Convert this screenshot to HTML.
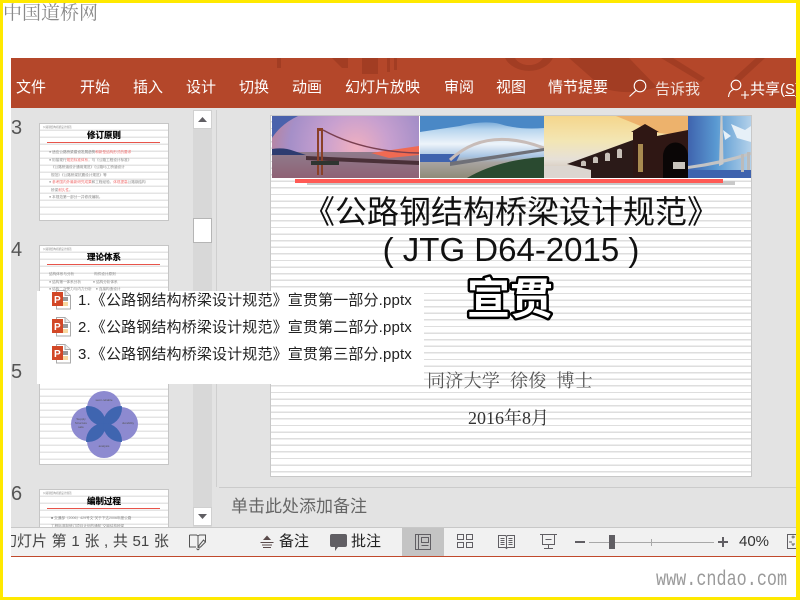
<!DOCTYPE html>
<html><head><meta charset="utf-8">
<style>
html,body{margin:0;padding:0;background:#fff}
#p{position:relative;width:800px;height:600px;overflow:hidden;background:#fff;font-family:"Liberation Sans","Noto Sans CJK SC",sans-serif}
#p div{position:absolute;white-space:nowrap}
.m{top:79px;color:#fff;font-size:15px;line-height:18px}
.lines{background-color:#fff;background-image:repeating-linear-gradient(to bottom,#fff 0,#fff 5.2px,#dedede 5.2px,#dedede 6.6px)}
.th{left:39px;width:128px;border:1px solid #c6c6c6;background-color:#fff;background-image:repeating-linear-gradient(to bottom,#fff 0,#fff 5.4px,#e4e4e4 5.4px,#e4e4e4 7px);overflow:hidden}
.num{left:11px;font-size:20px;color:#555;line-height:22px}
.tt{left:0;width:128px;text-align:center;font-size:8.5px;font-weight:bold;color:#000;top:5px;line-height:12px;-webkit-text-stroke:.2px #000}
.rl{left:7px;width:113px;height:1px;background:#e8544a;top:18px}
.sm{font-size:3.6px;line-height:7.5px;color:#888;left:9px}
.sm b{color:#f07070;font-weight:normal}
.hd{font-size:2.6px;color:#888;left:3px;top:1px}
.f{left:78px;font-size:15px;color:#222;line-height:20px;letter-spacing:.15px}
.st{font-size:15px;line-height:20px;color:#222}
</style></head><body><div id="p">
<!-- yellow frame -->
<div style="left:0;top:0;width:800px;height:3px;background:#ffe900"></div>
<div style="left:0;top:0;width:3px;height:600px;background:#ffe900"></div>
<div style="left:796px;top:0;width:4px;height:600px;background:#ffe900"></div>
<div style="left:0;top:597px;width:800px;height:3px;background:#ffe900"></div>
<!-- watermark -->
<div style="left:3px;top:0;font-size:19px;line-height:24px;color:#8a8a8a;font-family:'Noto Serif CJK SC','Liberation Serif',serif">中国道桥网</div>
<div style="left:656px;top:569px;font-size:21px;line-height:24px;color:#9a9a9a;font-family:'Liberation Mono',monospace;transform:scaleX(.8);transform-origin:left top">www.cndao.com</div>
<!-- ribbon -->
<div style="left:11px;top:58px;width:785px;height:50px;background:#b4472a;overflow:hidden">
<svg width="785" height="50" style="position:absolute;left:0;top:0">
<g fill="#a23d23"><rect x="266" y="0" width="4" height="10"/><path d="M321 0h16v10h-6z"/><rect x="351" y="0" width="16" height="16"/><rect x="376" y="0" width="3" height="14"/><rect x="383" y="0" width="3" height="12"/>
<path d="M494 0a26 21 0 0 0 48 0h-10a15 11 0 0 1-28 0z"/><path d="M558 0l34 30q14 5 30 4q12-1 24-5l-28-29z"/><path d="M650 0l40 24l4-4l-32-20z"/><path d="M745 0l-22 20l5 4l26-24z"/></g></svg></div>
<div class="m" style="left:16px">文件</div><div class="m" style="left:80px">开始</div><div class="m" style="left:133px">插入</div><div class="m" style="left:186px">设计</div><div class="m" style="left:239px">切换</div><div class="m" style="left:292px">动画</div><div class="m" style="left:345px">幻灯片放映</div><div class="m" style="left:444px">审阅</div><div class="m" style="left:496px">视图</div><div class="m" style="left:548px">情节提要</div>
<svg width="20" height="20" style="position:absolute;left:628px;top:78px" fill="none" stroke="#fff" stroke-width="1.1"><circle cx="12" cy="8" r="5.8"/><path d="M8 12.500L1.500 18.500"/></svg>
<div class="m" style="left:655px;top:81px;color:#f2e2dc">告诉我</div>
<svg width="22" height="22" style="position:absolute;left:727px;top:79px" fill="none" stroke="#fff" stroke-width="1.1"><circle cx="9" cy="6" r="4.800"/><path d="M1.500 18q.5-6 5-7.500M14 16h8M18 12v8"/></svg>
<div class="m" style="left:750px;top:81px;width:46px;overflow:hidden">共享(<u>S</u>)</div>
<!-- panels -->
<div style="left:11px;top:108px;width:785px;height:419px;background:#e3e3e3"></div>
<div style="left:216px;top:110px;width:1px;height:377px;background:#cfcfcf"></div>
<!-- thumbs -->
<div class="num" style="top:117px">3</div>
<div class="th" style="top:123px;height:96px"><div class="hd">公路钢结构桥梁设计规范</div><div class="tt">修订原则</div><div class="rl"></div>
<div class="sm" style="top:25px">● 适应公路桥梁建设发展趋势<b>和新型结构形式的要求</b><br>● 衔接现行<b>规范标准体系</b>，与《公路工程设计标准》<br>&nbsp;&nbsp;《公路桥涵设计通用规范》《公路圬工桥涵设计<br>&nbsp;&nbsp;规范》《公路桥梁抗震设计规范》等<br>● <b>参考国内外最新研究成果</b>和工程经验，<b>体现提高</b>公路钢结构<br>&nbsp;&nbsp;桥梁<b>耐久性</b>。<br>● 本规范第一部分一并修改编制。</div></div>
<div class="num" style="top:239px">4</div>
<div class="th" style="top:245px;height:96px"><div class="hd">公路钢结构桥梁设计规范</div><div class="tt">理论体系</div><div class="rl"></div>
<div class="sm" style="top:25px">结构体系与分析 &nbsp;&nbsp;&nbsp;&nbsp;&nbsp;&nbsp;&nbsp;&nbsp;&nbsp;&nbsp;&nbsp;&nbsp;&nbsp;&nbsp;&nbsp;&nbsp;&nbsp;&nbsp;&nbsp;构件设计原则<br>● 结构第一体系分析 &nbsp;&nbsp;&nbsp;&nbsp;&nbsp;&nbsp;&nbsp;&nbsp;&nbsp;&nbsp;&nbsp;● 结构分析体系<br>● 结构二次受力与内力分析 &nbsp;&nbsp;&nbsp;● 连接构造设计</div></div>
<div class="num" style="top:361px">5</div>
<div class="th" style="top:368px;height:95px">
<svg width="128" height="95" style="position:absolute;left:0;top:0">
<defs><clipPath id="ct"><circle cx="64" cy="39" r="18"/></clipPath><clipPath id="cb"><circle cx="64" cy="72" r="18"/></clipPath></defs>
<g fill="#8d8ad0"><circle cx="64" cy="39" r="17"/><circle cx="64" cy="72" r="17"/><circle cx="48" cy="55" r="17"/><circle cx="81" cy="55" r="17"/></g>
<g fill="#3f65b0"><circle cx="48" cy="55" r="18" clip-path="url(#ct)"/><circle cx="81" cy="55" r="18" clip-path="url(#ct)"/><circle cx="48" cy="55" r="18" clip-path="url(#cb)"/><circle cx="81" cy="55" r="18" clip-path="url(#cb)"/></g>
<g fill="#555" font-size="3" font-family="'Liberation Sans','Noto Sans CJK SC',sans-serif" text-anchor="middle"><text x="64" y="32">semi-reliable</text><text x="41" y="51">Supply</text><text x="41" y="55">Structure</text><text x="41" y="59">safe</text><text x="88" y="55">durability</text><text x="64" y="78">analysis</text></g></svg></div>
<div class="num" style="top:483px">6</div>
<div class="th" style="top:489px;height:50px"><div class="hd">公路钢结构桥梁设计规范</div><div class="tt">编制过程</div><div class="rl"></div>
<div class="sm" style="top:25px">&nbsp;&nbsp;■ 交通部〔2006〕429号文"关于下达2006年度公路<br>&nbsp;&nbsp;工程标准制修订项目计划的通知"交钢结构桥梁</div></div>
<div style="left:11px;top:527px;width:210px;height:1px;background:#e3e3e3"></div>
<!-- scrollbar -->
<div style="left:193px;top:110px;width:19px;height:417px;background:#d8d8d8"></div>
<div style="left:193px;top:110px;width:19px;height:19px;background:#fff;box-shadow:inset 0 0 0 1px #d0d0d0"></div>
<svg width="19" height="19" style="position:absolute;left:193px;top:110px"><path d="M5 12h9l-4.500-5z" fill="#605e63"/></svg>
<div style="left:193px;top:218px;width:17px;height:23px;background:#fff;border:1px solid #b5b5b5"></div>
<div style="left:193px;top:507px;width:19px;height:19px;background:#fff;box-shadow:inset 0 0 0 1px #d0d0d0"></div>
<svg width="19" height="19" style="position:absolute;left:193px;top:507px"><path d="M5 7h9l-4.500 5z" fill="#605e63"/></svg>
<!-- slide -->
<div class="lines" style="left:270px;top:115px;width:480px;height:360px;border:1px solid #c8c8c8;overflow:hidden"></div>
<svg width="480" height="72" style="position:absolute;left:271px;top:116px" viewBox="0 0 480 72">
<defs>
<radialGradient id="g1" gradientUnits="userSpaceOnUse" cx="85" cy="32" r="95"><stop offset="0" stop-color="#f0b0c0"/><stop offset=".35" stop-color="#c8a0cf"/><stop offset=".7" stop-color="#a58fc8"/><stop offset="1" stop-color="#c0808f"/></radialGradient>
<linearGradient id="gw" x1="0" y1="0" x2="0" y2="1"><stop offset="0" stop-color="#8f7c8c"/><stop offset="1" stop-color="#8f6275"/></linearGradient>
<linearGradient id="g2" x1="0" y1="0" x2="0" y2="1"><stop offset="0" stop-color="#4a8ac8"/><stop offset=".22" stop-color="#b7d5ee"/><stop offset=".45" stop-color="#eef4fa"/><stop offset=".65" stop-color="#a8c4e2"/><stop offset=".75" stop-color="#a8a4a0"/><stop offset="1" stop-color="#8f8a78"/></linearGradient>
<linearGradient id="g3" x1="0" y1="0" x2="0" y2="1"><stop offset="0" stop-color="#f5d68c"/><stop offset=".4" stop-color="#f3e6b4"/><stop offset=".7" stop-color="#e6e0d8"/><stop offset="1" stop-color="#c9b9a8"/></linearGradient>
<linearGradient id="g4" x1="0" y1="0" x2="1" y2="0"><stop offset="0" stop-color="#3f63ae"/><stop offset=".45" stop-color="#5a9ad2"/><stop offset="1" stop-color="#b3d1ea"/></linearGradient>
</defs>
<rect x="1" y="0" width="147" height="62" fill="url(#g1)"/>
<path d="M1 0h26Q10 8 1 22z" fill="#4a62ac"/>
<rect x="1" y="36" width="147" height="26" fill="url(#gw)"/>
<path d="M1 33q12-2 22 2l12 4H1z" fill="#2d3c70"/>
<path d="M100 37l48-7v9l-30 3z" fill="#f06a52"/><path d="M35 40l113 5v4l-113-5z" fill="#4a3038"/>
<path d="M46 12h6v47h-2V15h-2v44h-2z" fill="#8a4028"/><path d="M52 14q40 22 96 23" fill="none" stroke="#7a4050" stroke-width="1.500"/><path d="M40 45h28v4H40z" fill="#2e3530"/>
<rect x="149" y="0" width="124" height="62" fill="url(#g2)"/>
<path d="M149 0h124v12q-26 2-44-4q-16-4-40 2l-40 6z" fill="#4a88c6"/><path d="M149 38h40l-4 8h-36z" fill="#3f63ae"/>
<path d="M179 44q36-34 94-12" fill="none" stroke="#c8bcb8" stroke-width="3"/><path d="M179 46l94-14v3l-94 15z" fill="#6f7078"/><path d="M196 62q30-18 77-21v21z" fill="#2a4a30"/>
<rect x="273" y="0" width="144" height="62" fill="url(#g3)"/>
<path d="M345 0h72v20l-30-3z" fill="#edb26c"/>
<path d="M273 50h70v12h-70z" fill="#dcd6d0"/>
<path d="M296 48l66-24v38h-42v-8z" fill="#2b1a18"/>
<path d="M310 46a3 3 0 0 1 5 0v4h-5zM322 42a3 3 0 0 1 5 0v5h-5zM334 38a3 3 0 0 1 5 0v7h-5zM346 34a3 3 0 0 1 5 0v8h-5z" fill="#c8c0b8"/>
<path d="M362 62V16h-2l14-8 14 8h-2v4l31-6v48z" fill="#2f1714"/><path d="M367 28h5v28h-5z" fill="#a88a50"/><path d="M392 62V40a12 13 0 0 1 25 0v22z" fill="#0a0606"/><path d="M402 46h12v7h-12z" fill="#c8c4bc"/>
<rect x="417" y="0" width="63" height="62" fill="url(#g4)"/>
<path d="M460 8l14 6l6-4v16l-14-4zM452 14l8 6-6 4z" fill="#e6f0f8"/>
<path d="M417 54h63v8h-63z" fill="#3f63ae"/><path d="M417 50q30-4 63-14v3q-30 10-63 14z" fill="#c4c4c4"/><path d="M448 50l1.500-50h2l1 48z" fill="#c9c9c9"/><path d="M470 38h3v18h-3zM476 36h3v18h-3z" fill="#bbb"/>
<rect x="148" y="0" width="1" height="62" fill="#fff"/>
<rect x="36" y="65" width="428" height="4" fill="#c9c9c9"/><rect x="24" y="63" width="428" height="4" fill="#ff5a55"/>
</svg>
<div style="left:271px;top:190px;width:480px;text-align:center;font-size:32px;line-height:44px;color:#111">《公路钢结构桥梁设计规范》</div>
<div style="left:271px;top:228px;width:480px;text-align:center;font-size:33px;line-height:44px;color:#111">( JTG D64-2015 )</div>
<svg width="110" height="60" style="position:absolute;left:455px;top:268px">
<text x="12" y="46" font-size="43" font-weight="bold" font-family="'Noto Sans CJK SC',sans-serif" fill="#fff" stroke="#000" stroke-width="5" stroke-linejoin="round" paint-order="stroke">宣贯</text>
</svg>
<div style="left:427px;top:368px;font-size:18px;line-height:24px;color:#555;letter-spacing:.3px;font-family:'Noto Serif CJK SC',serif">同济大学&nbsp;&nbsp;徐俊&nbsp;&nbsp;博士</div>
<div style="left:468px;top:406px;font-size:18px;line-height:24px;color:#333;font-family:'Liberation Serif','Noto Serif CJK SC',serif">2016年8月</div>
<!-- notes -->
<div style="left:219px;top:487px;width:577px;height:1px;background:#cbcbcb"></div>
<div style="left:231px;top:496px;font-size:17px;line-height:22px;color:#666">单击此处添加备注</div>
<!-- overlay -->
<div style="left:37px;top:291px;width:387px;height:93px;background:#fff"></div>
<svg width="24" height="80" style="position:absolute;left:51px;top:287px">
<g><path d="M5.500 3.500H14l5.500 5V22H5.500z" fill="#fff" stroke="#aaa"/><path d="M14 3.500v5h5.500" fill="#eee" stroke="#aaa"/><rect x="12" y="10" width="5" height="4" fill="#999"/><path d="M12 16h5M12 18h5" stroke="#f0b040"/><rect x="1" y="5" width="11" height="14" fill="#d24726"/><text x="3" y="16" font-size="10" font-weight="bold" fill="#fff" font-family="'Liberation Sans',sans-serif">P</text></g>
<g transform="translate(0,27)"><path d="M5.500 3.500H14l5.500 5V22H5.500z" fill="#fff" stroke="#aaa"/><path d="M14 3.500v5h5.500" fill="#eee" stroke="#aaa"/><rect x="12" y="10" width="5" height="4" fill="#999"/><path d="M12 16h5M12 18h5" stroke="#f0b040"/><rect x="1" y="5" width="11" height="14" fill="#d24726"/><text x="3" y="16" font-size="10" font-weight="bold" fill="#fff" font-family="'Liberation Sans',sans-serif">P</text></g>
<g transform="translate(0,54)"><path d="M5.500 3.500H14l5.500 5V22H5.500z" fill="#fff" stroke="#aaa"/><path d="M14 3.500v5h5.500" fill="#eee" stroke="#aaa"/><rect x="12" y="10" width="5" height="4" fill="#999"/><path d="M12 16h5M12 18h5" stroke="#f0b040"/><rect x="1" y="5" width="11" height="14" fill="#d24726"/><text x="3" y="16" font-size="10" font-weight="bold" fill="#fff" font-family="'Liberation Sans',sans-serif">P</text></g>
</svg>
<div class="f" style="top:291px">1.《公路钢结构桥梁设计规范》宣贯第一部分.pptx</div>
<div class="f" style="top:318px">2.《公路钢结构桥梁设计规范》宣贯第二部分.pptx</div>
<div class="f" style="top:345px">3.《公路钢结构桥梁设计规范》宣贯第三部分.pptx</div>
<!-- status -->
<div style="left:11px;top:528px;width:785px;height:28px;background:#f1f1f1;overflow:hidden">
<div style="left:-9px;top:4px;font-size:15px;line-height:20px;color:#444;word-spacing:.5px">幻灯片 第 1 张 , 共 51 张</div>
</div>
<div style="left:11px;top:527px;width:785px;height:1px;background:#c8c8c8"></div>
<div style="left:11px;top:556px;width:785px;height:1px;background:#c0492c"></div>
<svg width="20" height="20" style="position:absolute;left:188px;top:533px" fill="none" stroke="#555"><path d="M1.500 2h7l1.500 1 1.500-1h6v7M10 3v12M1.500 2v12H8M10 17l-1.500-1.500M10 17l1.500-1.500M15.500 7l2 2-5 5-2 .5.500-2z"/></svg>
<svg width="16" height="16" style="position:absolute;left:259px;top:534px"><path d="M4 6h8L8 1.500z" fill="#5a4a4a"/><path d="M1.500 8.500h13M3 11h10M4 13.500h8" stroke="#5a4a4a"/></svg>
<div class="st" style="left:279px;top:532px">备注</div>
<svg width="20" height="18" style="position:absolute;left:329px;top:533px"><path d="M3 1h13q2 0 2 2v9q0 2-2 2H9l-3 4v-4H3q-2 0-2-2V3q0-2 2-2z" fill="#605e63"/></svg>
<div class="st" style="left:351px;top:532px">批注</div>
<div style="left:402px;top:528px;width:42px;height:28px;background:#c4c4c4"></div>
<svg width="18" height="18" style="position:absolute;left:414px;top:533px" fill="none" stroke="#605e63"><path d="M1.500 1.500h15v15h-15zM4.500 1.500v15M7.500 4.500h7v5h-7zM7.500 12.500h7"/></svg>
<svg width="18" height="18" style="position:absolute;left:455px;top:533px" fill="none" stroke="#605e63"><path d="M2.500 1.500h6v5h-6zM11.500 1.500h6v5h-6zM2.500 9.500h6v5h-6zM11.500 9.500h6v5h-6z"/></svg>
<svg width="18" height="18" style="position:absolute;left:498px;top:533px" fill="none" stroke="#605e63"><path d="M.5 2.500h7l1 1 1-1h7v12h-7l-1 1-1-1h-7zM8.500 3.500v12M2.500 5.500h4M2.500 7.500h4M2.500 9.500h4M2.500 11.500h4M10.500 5.500h4M10.500 7.500h4M10.500 9.500h4M10.500 11.500h4"/></svg>
<svg width="18" height="18" style="position:absolute;left:540px;top:533px" fill="none" stroke="#605e63"><path d="M0 1.500h17M2.500 1.500v10h12v-10M8.500 11.500v4M4 15.500h9M5.500 6.500h6"/></svg>
<div style="left:575px;top:541px;width:10px;height:2px;background:#605e63"></div>
<div style="left:589px;top:542px;width:125px;height:1px;background:#a8a8a8"></div>
<div style="left:651px;top:539px;width:1px;height:7px;background:#a8a8a8"></div>
<div style="left:609px;top:535px;width:6px;height:14px;background:#605e63"></div>
<div style="left:718px;top:541px;width:10px;height:2px;background:#605e63"></div>
<div style="left:722px;top:537px;width:2px;height:10px;background:#605e63"></div>
<div style="left:739px;top:533px;font-size:15px;line-height:18px;color:#333">40%</div>
<svg width="10" height="16" style="position:absolute;left:786px;top:534px" fill="none" stroke="#605e63"><path d="M10 .5H1.500v14H10M7 1.500v3M5.500 3H9M3 8h3M7 12v-2M5.500 10H9"/></svg>
</div></body></html>
